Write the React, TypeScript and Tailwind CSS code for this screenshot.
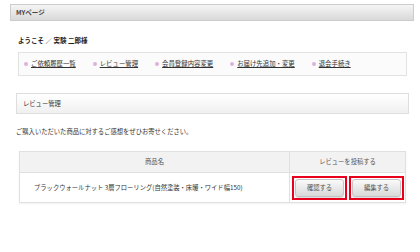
import React from 'react'

const links = ['ご依頼履歴一覧', 'レビュー管理', '会員登録内容変更', 'お届け先追加・変更', '退会手続き']

function Annotated({ label }: { label: string }) {
  return (
    <div className="border-2 border-[#e8001c] p-[1px] w-[55px] h-[24px]">
      <button className="w-full h-full rounded-[3px] border border-[#c4c4c4] bg-gradient-to-b from-[#fafafa] to-[#d9d9d9] text-[6.3px] text-[#555] shadow-[0_1px_1px_rgba(0,0,0,0.15)]">
        {label}
      </button>
    </div>
  )
}

export default function App() {
  return (
    <div
      className="w-[420px] h-[252px] bg-white text-[#333] pt-[4px] overflow-hidden"
      style={{ fontFamily: '"Noto Sans CJK JP", "Noto Sans", sans-serif' }}
    >
      <div className="ml-[10px] w-[404px] h-[17px] flex items-center px-[5px] border border-[#cccccc] bg-gradient-to-b from-[#f5f5f5] to-[#d9d9d9] text-[6.5px] font-bold text-[#444]">
        MYページ
      </div>

      <div className="ml-[18px] mt-[14px] text-[6.5px] font-bold leading-[10px] text-[#222]">
        ようこそ ／ 実験 二郎様
      </div>

      <div className="ml-[18px] mt-[7px] w-[389px] h-[24px] flex items-center gap-[17px] px-[5px] border border-[#e2e2e2] bg-[#fbfbfb]">
        {links.map((l) => (
          <span key={l} className="flex items-center gap-[3px] text-[6.4px] text-[#333] underline">
            <span className="w-[4px] h-[4px] rounded-full bg-[#dcb2dc]" />
            {l}
          </span>
        ))}
      </div>

      <div className="ml-[16px] mt-[17px] w-[393px] h-[21px] flex items-center px-[6px] border border-[#dedede] bg-gradient-to-b from-[#ffffff] to-[#f0f0f0] text-[6.3px] text-[#333]">
        レビュー管理
      </div>

      <div className="ml-[16px] mt-[13px] text-[6.3px] leading-[10px] text-[#333]">
        ご購入いただいた商品に対するご感想をぜひお寄せください。
      </div>

      <div className="ml-[19px] mt-[14px] w-[387px] border border-[#e0e0e0] shadow-[0_1px_2px_rgba(0,0,0,0.06)]">
        <div className="flex h-[21px] bg-[#f2f2f2] border-b border-[#e0e0e0] text-[6.3px] text-[#555]">
          <div className="w-[270px] flex items-center justify-center border-r border-[#e0e0e0]">商品名</div>
          <div className="flex-1 flex items-center justify-center">レビューを投稿する</div>
        </div>
        <div className="flex h-[29px] bg-white text-[6.3px] text-[#333]">
          <div className="w-[270px] flex items-center pl-[14px] border-r border-[#e0e0e0]">
            ブラックウォールナット 3層フローリング(自然塗装・床暖・ワイド幅150)
          </div>
          <div className="flex-1 flex items-center gap-[2px] pl-[2px]">
            <Annotated label="確認する" />
            <Annotated label="編集する" />
          </div>
        </div>
      </div>
    </div>
  )
}
